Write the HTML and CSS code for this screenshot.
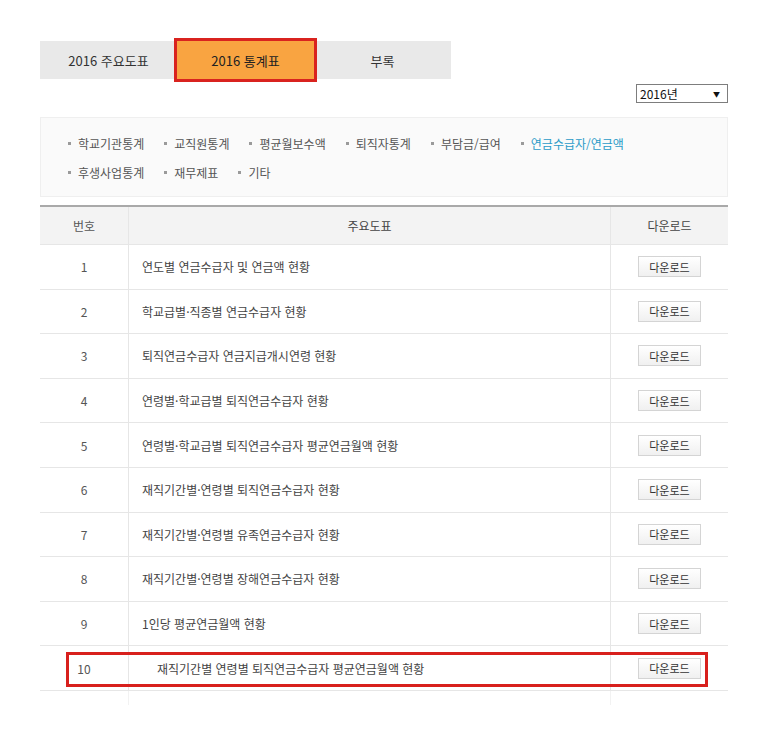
FILE: index.html
```html
<!DOCTYPE html>
<html lang="ko">
<head>
<meta charset="utf-8">
<title>2016 통계표</title>
<link rel="stylesheet" href="styles.css">
</head>
<body>
<div class="page">
  <div class="tabs">
    <div class="tab">2016 주요도표</div>
    <div class="tab active">2016 통계표</div>
    <div class="tab">부록</div>
  </div>

  <div class="year-row">
    <div class="year-select"><span>2016년</span><span class="arrow">▼</span></div>
  </div>

  <div class="cats">
    <span class="cat">학교기관통계</span>
    <span class="cat">교직원통계</span>
    <span class="cat">평균월보수액</span>
    <span class="cat">퇴직자통계</span>
    <span class="cat">부담금/급여</span>
    <span class="cat current">연금수급자/연금액</span>
    <span class="cat">후생사업통계</span>
    <span class="cat">재무제표</span>
    <span class="cat">기타</span>
  </div>

  <div class="table">
    <div class="row head">
      <div class="c num">번호</div>
      <div class="c title-h">주요도표</div>
      <div class="c dl">다운로드</div>
    </div>
    <div class="row"><div class="c num">1</div><div class="c title">연도별 연금수급자 및 연금액 현황</div><div class="c dl"><span class="btn">다운로드</span></div></div>
    <div class="row"><div class="c num">2</div><div class="c title">학교급별·직종별 연금수급자 현황</div><div class="c dl"><span class="btn">다운로드</span></div></div>
    <div class="row"><div class="c num">3</div><div class="c title">퇴직연금수급자 연금지급개시연령 현황</div><div class="c dl"><span class="btn">다운로드</span></div></div>
    <div class="row"><div class="c num">4</div><div class="c title">연령별·학교급별 퇴직연금수급자 현황</div><div class="c dl"><span class="btn">다운로드</span></div></div>
    <div class="row"><div class="c num">5</div><div class="c title">연령별·학교급별 퇴직연금수급자 평균연금월액 현황</div><div class="c dl"><span class="btn">다운로드</span></div></div>
    <div class="row"><div class="c num">6</div><div class="c title">재직기간별·연령별 퇴직연금수급자 현황</div><div class="c dl"><span class="btn">다운로드</span></div></div>
    <div class="row"><div class="c num">7</div><div class="c title">재직기간별·연령별 유족연금수급자 현황</div><div class="c dl"><span class="btn">다운로드</span></div></div>
    <div class="row"><div class="c num">8</div><div class="c title">재직기간별·연령별 장해연금수급자 현황</div><div class="c dl"><span class="btn">다운로드</span></div></div>
    <div class="row"><div class="c num">9</div><div class="c title">1인당 평균연금월액 현황</div><div class="c dl"><span class="btn">다운로드</span></div></div>
    <div class="row marked"><div class="c num">10</div><div class="c title">재직기간별 연령별 퇴직연금수급자 평균연금월액 현황</div><div class="c dl"><span class="btn">다운로드</span></div><div class="highlight"></div></div>
    <div class="tail"><div></div><div class="mid"></div><div></div></div>
  </div>
</div>
</body>
</html>
```

FILE: styles.css
```css
* { box-sizing: border-box; }
html, body { margin: 0; padding: 0; background: #fff; }
body {
  font-family: "Noto Sans CJK KR", "Noto Sans", sans-serif;
  color: #444;
}
.page {
  width: 768px;
  padding: 41px 40px 0 40px;
}

/* tabs */
.tabs {
  display: flex;
  width: 411px;
  height: 38px;
  background: #e9e9e9;
}
.tab {
  width: 137px;
  display: flex;
  align-items: center;
  justify-content: center;
  font-size: 13px;
  color: #333;
}
.tab.active {
  background: #f9a441;
  outline: 3px solid #d9231f;
  color: #222;
}

/* year select */
.year-row {
  display: flex;
  justify-content: flex-end;
  margin-top: 5px;
}
.year-select {
  width: 92px;
  height: 19px;
  border: 1px solid #7d7d7d;
  display: flex;
  align-items: center;
  justify-content: space-between;
  padding: 0 7px 0 3px;
  font-size: 12px;
  color: #111;
  background: #fff;
}
.year-select .arrow { font-size: 7px; color: #111; }

/* categories */
.cats {
  margin-top: 14px;
  background: #fafafa;
  border: 1px solid #efefef;
  padding: 11px 20px 9px 27px;
  display: flex;
  flex-wrap: wrap;
  column-gap: 20px;
  font-size: 12px;
  line-height: 29px;
  color: #555;
  min-height: 79px;
}
.cat {
  display: inline-flex;
  align-items: center;
}
.cat::before {
  content: "";
  width: 3px;
  height: 3px;
  background: #9a9a9a;
  margin-right: 7px;
}
.cat:nth-child(6) { margin-right: 60px; }
.cat.current { color: #2a9ac8; }

/* table */
.table {
  margin-top: 8px;
  border-top: 2px solid #a9a9a9;
}
.row {
  position: relative;
  display: grid;
  grid-template-columns: 88px 483px 117px;
  height: 44.6px;
  border-bottom: 1px solid #e6e6e6;
  font-size: 12px;
}
.row.head {
  height: 38px;
  background: #f3f3f3;
  color: #444;
}
.c {
  display: flex;
  align-items: center;
}
.c.num { justify-content: center; font-size: 12px; color: #555; }
.c.title-h { justify-content: center; border-left: 1px solid #e6e6e6; border-right: 1px solid #e6e6e6; }
.c.title { padding-left: 13px; color: #444; border-left: 1px solid #e6e6e6; border-right: 1px solid #e6e6e6; }
.row.marked .c.title { padding-left: 28px; }
.c.dl { justify-content: center; }
.btn {
  display: inline-flex;
  align-items: center;
  justify-content: center;
  width: 63px;
  height: 21px;
  border: 1px solid #d4d4d4;
  background: linear-gradient(#ffffff, #f0f0f0);
  font-size: 11px;
  color: #333;
}
.highlight {
  position: absolute;
  left: 26px;
  right: 20px;
  top: 6px;
  bottom: 3px;
  border: 3px solid #d8201d;
  pointer-events: none;
}
.tail {
  display: grid;
  grid-template-columns: 88px 483px 117px;
  height: 14px;
}
.tail .mid {
  border-left: 1px solid #f2f2f2;
  border-right: 1px solid #f2f2f2;
}
```
